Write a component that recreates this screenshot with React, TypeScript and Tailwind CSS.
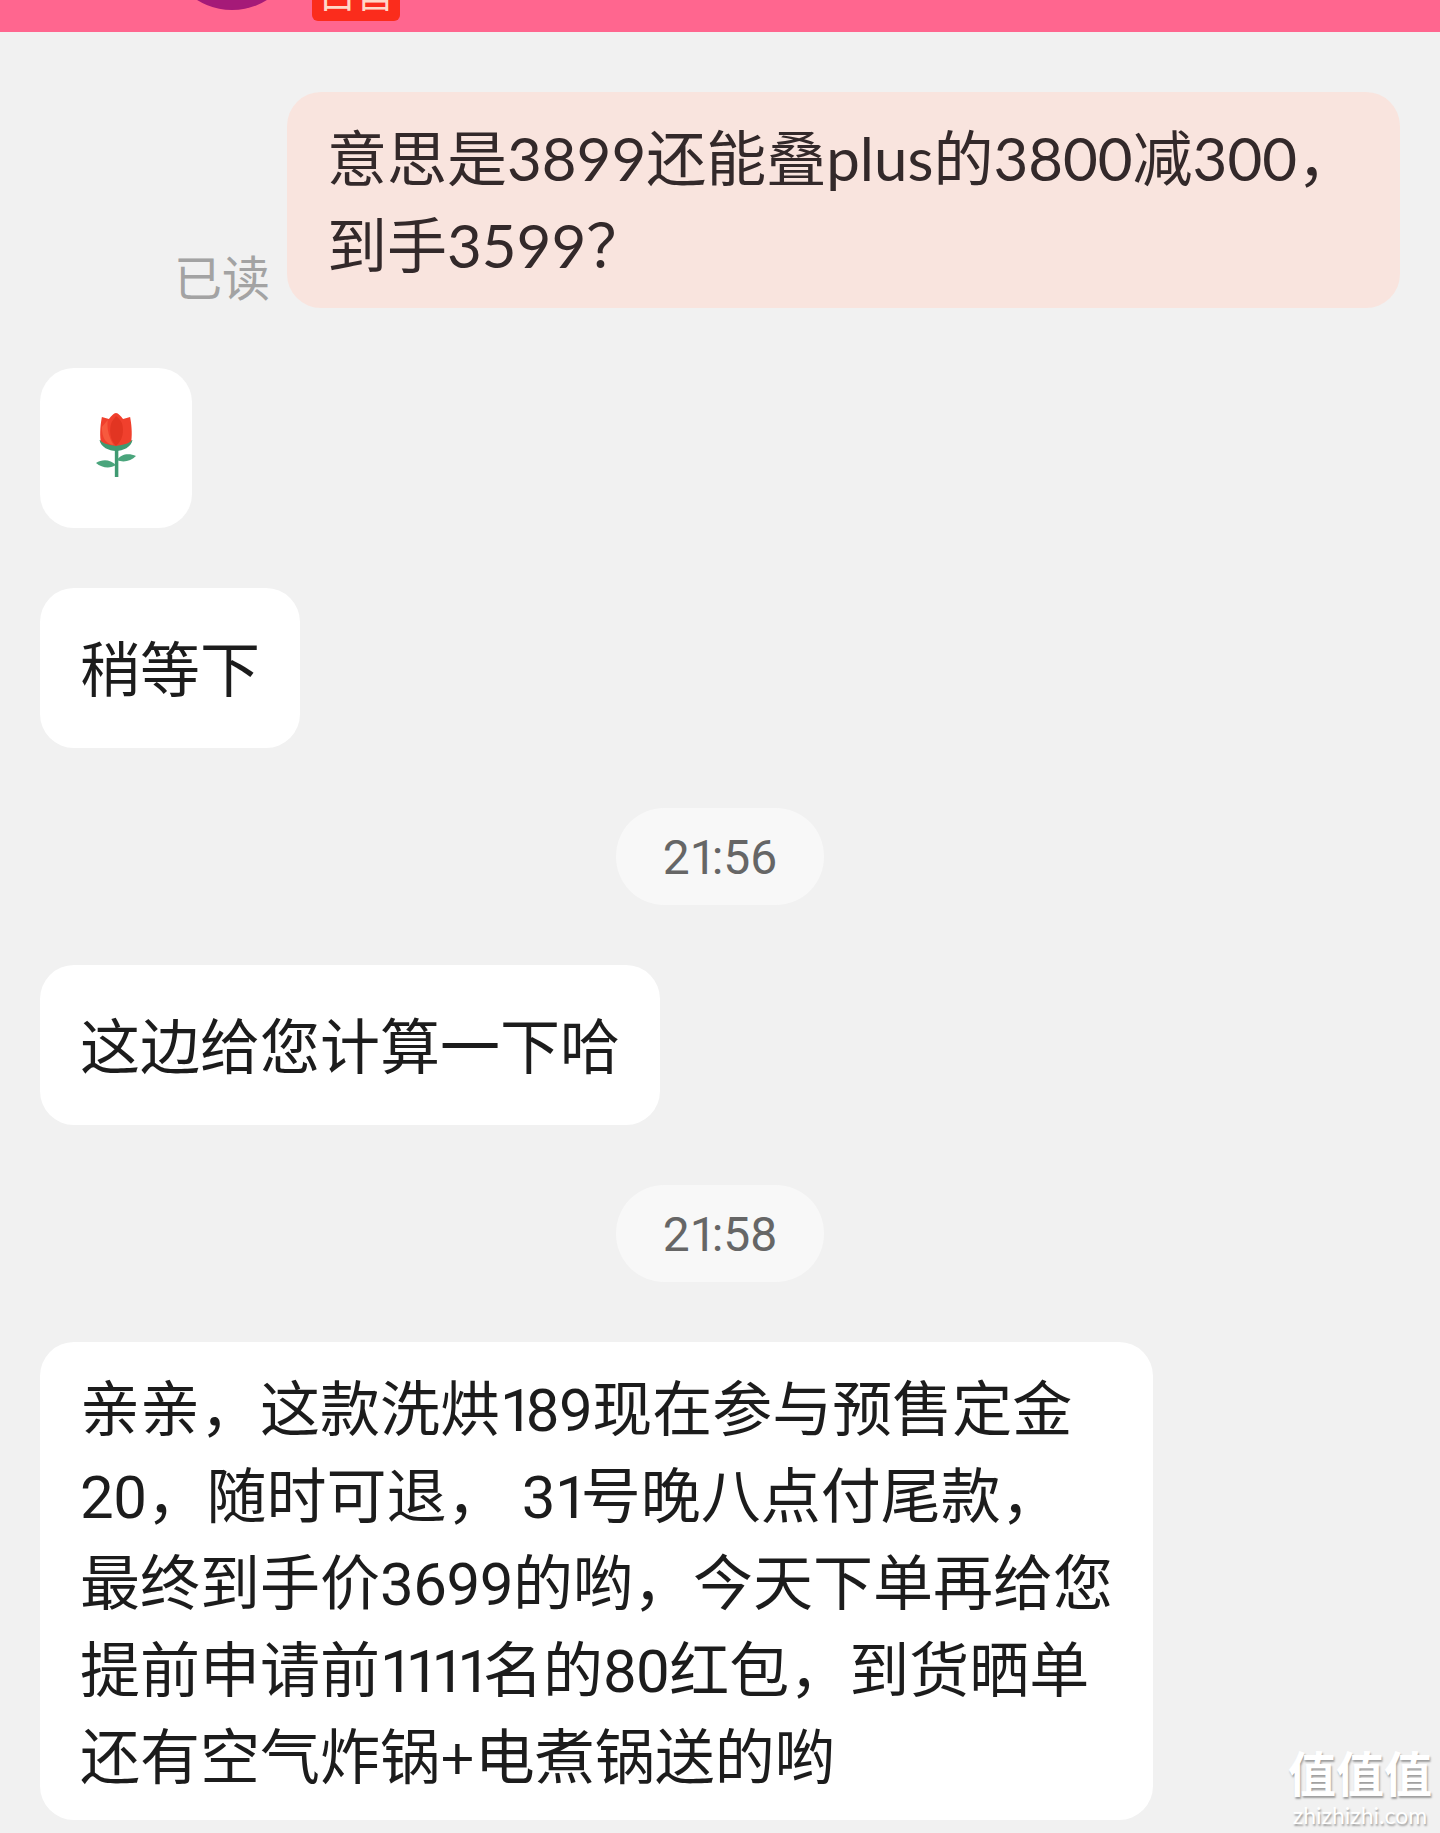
const FONT = "font-['Lato','Noto_Sans_CJK_SC','Noto_Sans',sans-serif]";

const Rose = () => (
  <svg width="40" height="64" viewBox="0 0 34 64" preserveAspectRatio="none" className="mb-[6px]">
    <path d="M17.5 30 L17.5 64" stroke="#3f9a72" strokeWidth="3" fill="none" />
    <path d="M18 47 C21 41 28 40 34 43 C30 48 23 50 18 47Z" fill="#4aa57c" />
    <path d="M17 52 C12 46 5 46 0 50 C5 55 12 56 17 52Z" fill="#4aa57c" />
    <path d="M3 27 C4 34 11 38 17 38 C23 38 30 34 31 27 Q17 34 3 27Z" fill="#3f9a72" />
    <path d="M4 28 C3 20 4 10 5 4 L11 6 C13 3 15 0 17 0 C19 0 21 3 23 6 L29 4 C30 10 31 20 30 28 C27 31 22 32 17 33 C12 32 7 31 4 28Z" fill="#f0402d" />
    <path d="M17 33 C12 27 11 18 13 10 C14 7 16 5 17 3 C19 5 21 7 22 10 C24 18 23 27 17 33Z" fill="#e23522" />
    <path d="M10 7 C9 15 11 25 15 32 C9 31 5 26 5 14Z" fill="#f75a3e" />
  </svg>
);

// the incoming messages use a narrower figure set with a thin "1"
const Num = ({ children }: { children: React.ReactNode }) => (
  <span className="font-['Roboto'] leading-[0] tracking-[-0.5px]">{children}</span>
);
const One = ({ children }: { children: React.ReactNode }) => (
  <span className="font-['Roboto'] leading-[0] tracking-[-8px]">{children}</span>
);

const Bubble = ({ children, className = "" }: { children: React.ReactNode; className?: string }) => (
  <div className={`rounded-[34px] bg-white px-10 text-[60px] leading-[87px] text-[#1c1c1c] ${className}`}>
    {children}
  </div>
);

const Time = ({ children }: { children: React.ReactNode }) => (
  <div className="flex justify-center">
    <div className="flex h-[97px] w-[208px] items-center justify-center rounded-[48px] bg-[#f8f8f8] pt-[2px] font-['Roboto'] text-[48px] text-[#666666]">
      {children}
    </div>
  </div>
);

export default function App() {
  return (
    <div className={`relative h-[1833px] w-[1440px] overflow-hidden bg-[#f1f1f1] ${FONT}`}>
      <header className="flex h-8 items-start overflow-hidden bg-[#ff668f]">
        <div className="ml-[166px] -mt-[122px] h-[132px] w-[132px] shrink-0 rounded-full bg-[#a51a78]" />
        <div className="ml-[14px] -mt-[20px] flex h-[41px] w-[88px] shrink-0 items-end justify-center rounded-md bg-[#fb2c1c] pb-2 text-[38px] leading-[41px] text-[#ffd8c8]">
          自营
        </div>
      </header>

      <main className="flex flex-col gap-[60px] px-10 pt-[60px]">
        <div className="flex items-end justify-end gap-[17px]">
          <span className="text-[48px] leading-[60px] text-[#a3a3a3]">已读</span>
          <div className="h-[216px] w-[1113px] rounded-[34px] bg-[#f9e4de] px-10 pt-[23px] pb-[19px] text-[60px] leading-[87px] text-[#33292a]">
            意思是3899还能叠plus的3800减300，到手3599？
          </div>
        </div>

        <div className="flex h-40 w-[152px] items-center justify-center rounded-[34px] bg-white">
          <Rose />
        </div>

        <Bubble className="w-[260px] whitespace-nowrap pt-[38px] pb-[35px]">稍等下</Bubble>

        <Time>
          <span>2</span>
          <span className="tracking-[-5px]">1</span>
          <span>:56</span>
        </Time>

        <Bubble className="w-[620px] whitespace-nowrap pt-[38px] pb-[35px]">这边给您计算一下哈</Bubble>

        <Time>
          <span>2</span>
          <span className="tracking-[-5px]">1</span>
          <span>:58</span>
        </Time>

        <Bubble className="w-[1113px] whitespace-nowrap pt-[23px] pb-[20px]">
          <p>亲亲，这款洗烘<One>1</One><Num>89</Num>现在参与预售定金</p>
          <p><Num>20</Num>，随时可退， <Num>3</Num><One>1</One>号晚八点付尾款，</p>
          <p>最终到手价<Num>3699</Num>的哟，今天下单再给您</p>
          <p>提前申请前<One>1111</One>名的<Num>80</Num>红包，到货晒单</p>
          <p>还有空气炸锅+电煮锅送的哟</p>
        </Bubble>
      </main>

      <div className="absolute bottom-[5px] right-[8px] flex flex-col items-center text-white [text-shadow:1px_2px_2px_rgba(0,0,0,0.35)]">
        <span className="text-[48px] font-bold leading-[56px]">值值值</span>
        <span className="text-[23px] leading-[26px]">zhizhizhi.com</span>
      </div>
    </div>
  );
}
